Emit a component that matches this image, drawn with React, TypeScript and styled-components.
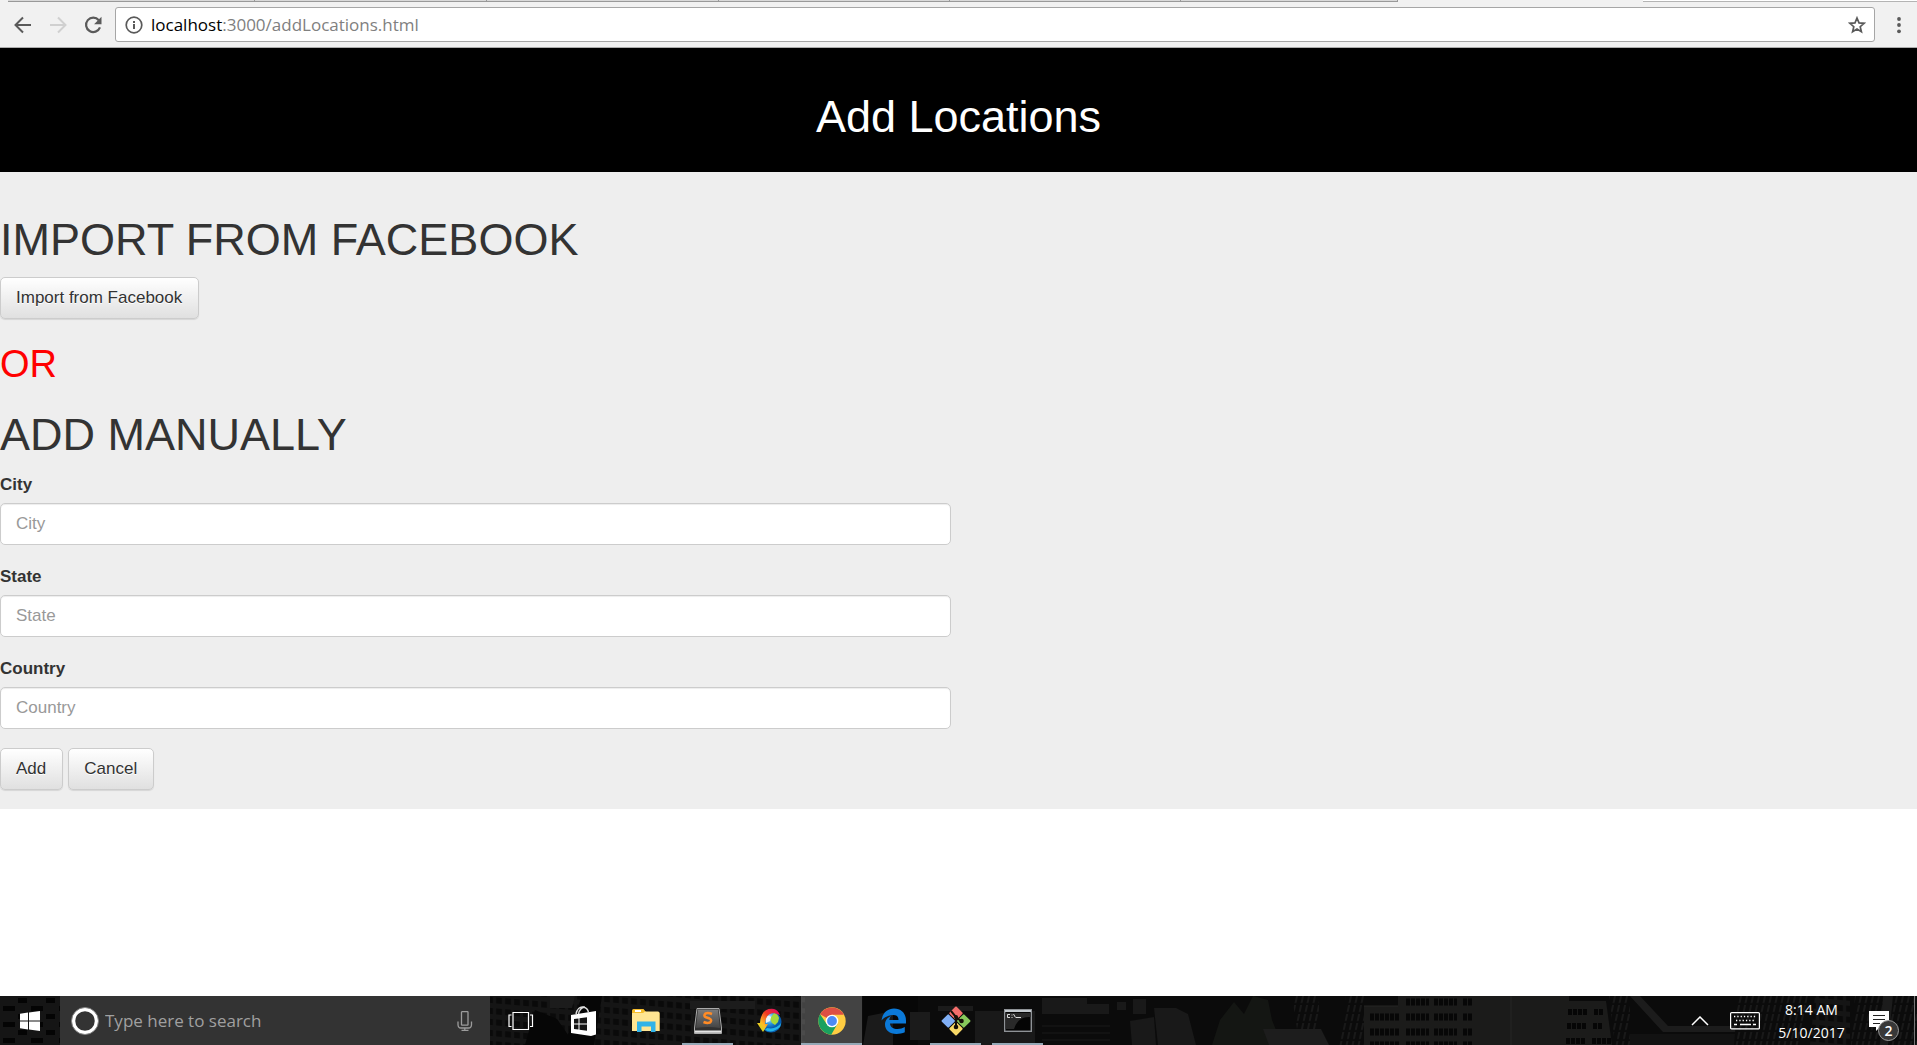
import React from "react";
import styled, { createGlobalStyle } from "styled-components";

const GlobalStyle = createGlobalStyle`
  *, *::before, *::after { box-sizing: border-box; }
  body { margin: 0; background: #fff; }
`;

const uiFont = `"Open Sans", "Noto Sans", sans-serif`;
const pageFont = `"Liberation Sans", Arial, sans-serif`;

const Screen = styled.div`
  display: flex;
  flex-direction: column;
  height: 100vh;
  overflow: hidden;
`;

/* ---------- Browser chrome ---------- */

const TabStrip = styled.div`
  display: flex;
  flex: none;
  height: 2px;
  padding-left: 8px;
  background: #f1f1f1;
`;

type TabState = "idle" | "active" | "empty";

const tabFill = { idle: "#d9d9d9", active: "#f1f1f1", empty: "#fff" };
const tabEdge = { idle: "1px solid #999", active: "0", empty: "1px solid #b4b4b4" };

const Tab = styled.div<{ $state: TabState; $grow: number }>`
  flex: ${(p) => p.$grow} 1 0;
  background: ${(p) => tabFill[p.$state]};
  border-bottom: ${(p) => tabEdge[p.$state]};
  border-right: ${(p) => (p.$state === "idle" ? "1px solid #999" : "0")};
`;

const Toolbar = styled.div`
  display: flex;
  flex: none;
  align-items: center;
  height: 46px;
  padding: 0 5px;
  background: #f1f1f1;
  border-bottom: 1px solid #adadad;
`;

const ToolButton = styled.button<{ $width?: number }>`
  display: flex;
  align-items: center;
  justify-content: center;
  flex: none;
  width: ${(p) => p.$width ?? 35}px;
  height: 34px;
  padding: 0;
  border: 0;
  background: none;
`;

const AddressBar = styled.div`
  display: flex;
  flex: 1;
  align-items: center;
  height: 35px;
  margin: 0 10px 0 5px;
  background: #fff;
  border: 1px solid #a6a6a6;
  border-radius: 3px;
`;

const Url = styled.div`
  flex: 1;
  color: #808080;
  font: 17px/24px ${uiFont};
  b {
    color: #000;
    font-weight: 400;
  }
`;

/* ---------- Web page ---------- */

const Page = styled.main`
  flex: 1;
  min-height: 0;
  background: #fff;
  color: #333;
  font: 17px/25px ${pageFont};
`;

const Banner = styled.header`
  padding: 19px 0 18px;
  background: #000;
  color: #fff;
  text-align: center;
`;

const Panel = styled.section`
  padding: 18px 0 19px;
  background: #eee;
`;

const Title = styled.h1`
  margin: 0;
  padding: 25px 0 12px;
  font-size: 45px;
  font-weight: 400;
  line-height: 50px;
`;

const Divider = styled.h2`
  margin: 0;
  padding-top: 25px;
  color: #f00;
  font-size: 38px;
  font-weight: 400;
  line-height: 41px;
`;

const Button = styled.button`
  display: block;
  height: 42px;
  padding: 0 16px 2px 15px;
  border: 1px solid #ccc;
  border-radius: 5px;
  background: linear-gradient(#fff, #e0e0e0);
  box-shadow: inset 0 1px 0 rgba(255, 255, 255, 0.15), 0 1px 1px rgba(0, 0, 0, 0.1);
  color: #333;
  font: inherit;
  text-shadow: 0 1px 0 #fff;
`;

const Field = styled.div`
  width: calc(50% - 8px);
  margin-bottom: 19px;
`;

const Label = styled.label`
  display: block;
  margin-bottom: 6px;
  font-weight: 700;
`;

const TextBox = styled.input`
  display: block;
  width: 100%;
  height: 42px;
  padding: 0 15px;
  border: 1px solid #ccc;
  border-radius: 5px;
  background: #fff;
  box-shadow: inset 0 1px 1px rgba(0, 0, 0, 0.075);
  color: #555;
  font: inherit;
  &::placeholder {
    color: #999;
    opacity: 1;
  }
`;

const Actions = styled.div`
  display: flex;
  gap: 5px;
`;

/* ---------- Taskbar ---------- */

const Taskbar = styled.footer`
  position: relative;
  display: flex;
  flex: none;
  height: 49px;
  background: #0b0b0b;
  color: #fff;
  font-family: ${uiFont};
`;

const Wallpaper = styled.svg`
  position: absolute;
  inset: 0;
  width: 100%;
  height: 100%;
`;

const StartButton = styled.button`
  position: relative;
  width: 60px;
  padding: 0;
  border: 0;
  background: none;
  svg {
    vertical-align: middle;
  }
`;

const SearchBox = styled.div`
  position: relative;
  display: flex;
  align-items: center;
  width: 430px;
  padding: 0 17px 0 11px;
  background: #333;
`;

const SearchInput = styled.input`
  flex: 1;
  min-width: 0;
  margin-left: 6px;
  padding: 0;
  border: 0;
  background: none;
  color: #a0a0a0;
  font: 17px/24px ${uiFont};
  &::placeholder {
    color: #a0a0a0;
    opacity: 1;
  }
`;

const Apps = styled.nav`
  position: relative;
  display: flex;
  flex: 1;
  gap: 1px;
  padding-left: 1px;
`;

const AppButton = styled.button<{ $running?: boolean; $active?: boolean }>`
  display: flex;
  align-items: center;
  justify-content: center;
  width: 61px;
  padding: 0;
  border: 0;
  background: ${(p) =>
    p.$active
      ? "linear-gradient(#94a8b6, #94a8b6) bottom / 100% 2px no-repeat, rgba(255, 255, 255, 0.23)"
      : p.$running
      ? "linear-gradient(#94a8b6, #94a8b6) bottom / 51px 2px no-repeat"
      : "none"};
`;

const Tray = styled.div`
  position: relative;
  display: flex;
  align-items: center;
  padding-right: 2px;
`;

const Clock = styled.time`
  width: 89px;
  font-size: 14px;
  line-height: 23px;
  text-align: center;
`;

const Notifications = styled.button`
  position: relative;
  width: 59px;
  height: 49px;
  padding: 0;
  border: 0;
  border-right: 1px solid #777;
  background: none;
  color: #fff;
  svg {
    position: absolute;
    left: 13px;
    top: 15px;
  }
`;

const Badge = styled.span`
  position: absolute;
  left: 22px;
  top: 24px;
  width: 21px;
  height: 21px;
  border: 1px solid #9a9a9a;
  border-radius: 50%;
  background: #383838;
  font: 600 14px/19px ${uiFont};
  text-align: center;
`;

/* ---------- Drawings ---------- */

const Arrow = ({ color, flip }: { color: string; flip?: boolean }) => (
  <svg width="20" height="20" viewBox="0 0 20 20" fill="none" stroke={color} strokeWidth="2">
    <path d={flip ? "M2 10h15M10 2.5l7.5 7.5-7.5 7.5" : "M18 10H3M10 2.5L2.5 10l7.5 7.5"} />
  </svg>
);

const Reload = () => (
  <svg width="20" height="20" viewBox="0 0 20 20">
    <path d="M15.8 5.2A7.2 7.2 0 1 0 17 12.4" fill="none" stroke="#5a5a5a" strokeWidth="2.2" />
    <path d="M18.5 1.8v7.4h-7.4z" fill="#5a5a5a" />
  </svg>
);

const Info = () => (
  <svg width="18" height="18" viewBox="0 0 18 18">
    <circle cx="9" cy="9" r="7.8" fill="none" stroke="#5a5a5a" strokeWidth="1.7" />
    <path d="M8 8h2v5H8zM8 5h2v2H8z" fill="#5a5a5a" />
  </svg>
);

const Star = () => (
  <svg width="18" height="18" viewBox="0 0 18 18">
    <path
      d="M9 2l2 4.9 5.1.4-3.9 3.4 1.2 5L9 13l-4.4 2.7 1.2-5L1.9 7.3 7 6.9z"
      fill="none"
      stroke="#5a5a5a"
      strokeWidth="1.7"
    />
  </svg>
);

const Dots = () => (
  <svg width="4" height="18" viewBox="0 0 4 18" fill="#5a5a5a">
    <circle cx="2" cy="3" r="1.9" />
    <circle cx="2" cy="9" r="1.9" />
    <circle cx="2" cy="15.3" r="1.9" />
  </svg>
);

const WindowsLogo = () => (
  <svg width="20" height="20" viewBox="0 0 20 20" fill="#fff">
    <path d="M0 2.7L8 1.5v8H0zM9 1.4L20 0v9.5H9zM0 10.5h8v8L0 17.3zM9 10.5h11V20L9 18.6z" />
  </svg>
);

const Mic = () => (
  <svg width="16" height="20" viewBox="0 0 16 20" fill="none" stroke="#9c9c9c" strokeWidth="1.3">
    <rect x="4.5" y="0.7" width="6.5" height="13.5" rx="0.5" />
    <path d="M1 10.5v3c0 2 1 3.5 3 3.5h7.5c2 0 3-1.5 3-3.5v-3M7.8 17v2.5M4.5 19.3h7" />
  </svg>
);

const TaskView = () => (
  <svg width="28" height="20" viewBox="0 0 28 20" fill="none" stroke="#fff" strokeWidth="1.2">
    <path d="M5 1.5h15.5v17H5zM3.5 4H1v11.5h2.5M22 4h2.5v11.5H22" />
  </svg>
);

const Store = () => (
  <svg width="28" height="32" viewBox="0 0 28 32">
    <path d="M1 10l25-4v23.5l-5 1.5-20-3z" fill="#fff" />
    <path d="M6 9c1-5 4-7.5 7-7 3 .5 5 2.5 5.5 5.5M8.5 9C9 5 12 2 15 2" fill="none" stroke="#ddd" strokeWidth="1.5" />
    <path d="M4 14l4.500-.6v5.200H4zM9.500 13.200l7.500-1v6.400H9.500zM4 19.500h4.500v5L4 24zM9.500 19.500H17v6.200l-7.500-1z" fill="#151515" />
  </svg>
);

const Folder = () => (
  <svg width="28" height="26" viewBox="0 0 28 26">
    <path d="M0 2.5Q0 1 1.5 1h10L14 4h12q1.5 0 1.5 1.5V23H0z" fill="#f5bd2d" />
    <path d="M3 2h6v2H3z" fill="#fff" />
    <path d="M0 5h11l2-1.5h13q1.5 0 1.5 1.5v18H0z" fill="#ffe592" />
    <path d="M5 13.5h18.5V24H19v-5.5h-9.5V24H5z" fill="#31b3e8" />
  </svg>
);

const Sublime = () => (
  <svg width="28" height="26" viewBox="0 0 28 26">
    <defs>
      <linearGradient id="key" x2="0" y2="1">
        <stop stopColor="#7b7b7b" />
        <stop offset="1" stopColor="#444" />
      </linearGradient>
    </defs>
    <path d="M3 .5h22l2.5 19.5v5.500H.5V20z" fill="#303030" stroke="#aaa" />
    <path d="M4 1.5h20l2 18.5q-12-2-24 0z" fill="url(#key)" />
    <path d="M1 22.5h26v2.3H1z" fill="#e4e4e4" />
    <path d="M18 6q-4-1.5-6.5-.5-2.5 2.500.5 3.800l3.500 1.200q3 1.500.5 4-3 1-6.500-.5" fill="none" stroke="#ff8b25" strokeWidth="2.5" />
  </svg>
);

const Downloader = () => (
  <svg width="26" height="26" viewBox="0 0 26 26">
    <defs>
      <linearGradient id="swoosh" x1="1" x2="0" y1="0" y2="1">
        <stop stopColor="#d9006e" />
        <stop offset=".4" stopColor="#f03a20" />
        <stop offset=".7" stopColor="#ffbd24" />
        <stop offset="1" stopColor="#b5e61c" />
      </linearGradient>
      <radialGradient id="globe" cx=".4" cy=".3">
        <stop stopColor="#d9f5ff" />
        <stop offset=".6" stopColor="#2894df" />
        <stop offset="1" stopColor="#075cae" />
      </radialGradient>
    </defs>
    <circle cx="14" cy="14" r="10.5" fill="url(#globe)" />
    <path d="M17 5q4 1 5 5l-1 4-3 3-3-2-2-4z" fill="#a5d83a" />
    <path d="M9 9q3-2 5 0l-1 4-4 2z" fill="#e9f8ff" />
    <path d="M17 1Q4-.5 3 15H0l6 9 5-8H8Q8 6 17 5l6 2Q21 2 17 1z" fill="url(#swoosh)" />
    <path d="M8 22q7 4 15-3l1-4q-5 7-14 5z" fill="#25b4e8" />
  </svg>
);

const Chrome = () => (
  <svg width="28" height="28" viewBox="0 0 28 28">
    <circle cx="14" cy="14" r="13.7" fill="#ffcd42" />
    <path d="M14 14L2.1 7.2A13.7 13.7 0 0 1 25.9 7.8H14z" fill="#dd4f43" />
    <path d="M2.1 7.2A13.7 13.7 0 0 0 13.2 27.7L19.4 17 14 14 8.6 17z" fill="#1aa15f" />
    <circle cx="14" cy="14" r="6.3" fill="#fff" />
    <circle cx="14" cy="14" r="4.9" fill="#4c8bf5" />
  </svg>
);

const Edge = () => (
  <svg width="26" height="26" viewBox="0 0 26 26">
    <path
      d="M.5 12.5C1.5 5 6.500.5 13 .5c7.500 0 12 5 12 12v3H9c.3 4 3.500 5.500 7.500 5.500 2.800 0 5.200-.7 7.300-2v5.300C21.500 25.500 18.500 26 15.500 26 8.500 26 4 22 4 16.500c0-4 2.500-7 6-8.500-1 1-1.500 2.300-1.700 4h9.200c0-3-1.500-5-5-5-4.500 0-9 2-12 5.500z"
      fill="#0b79d8"
    />
  </svg>
);

const Git = () => (
  <svg width="30" height="30" viewBox="0 0 30 30">
    <g transform="rotate(45 15 15)">
      <rect x="4.5" y="4.5" width="10" height="10" rx="1" fill="#f46e6b" />
      <rect x="15.5" y="4.5" width="10" height="10" rx="1" fill="#88c95b" />
      <rect x="4.5" y="15.5" width="10" height="10" rx="1" fill="#80aff5" />
      <rect x="15.5" y="15.5" width="10" height="10" rx="1" fill="#f8d967" />
    </g>
    <path d="M10 5l5 6v10M15 11l5 4" stroke="#171008" strokeWidth="2" fill="none" />
    <g fill="#171008">
      <circle cx="15" cy="11" r="2" />
      <circle cx="15" cy="21" r="2.3" />
      <circle cx="20.5" cy="15" r="2.3" />
    </g>
  </svg>
);

const Terminal = () => (
  <svg width="28" height="24" viewBox="0 0 28 24">
    <rect x=".7" y=".7" width="26.6" height="21.6" fill="#050505" stroke="#8e9296" strokeWidth="1.4" />
    <path d="M1 1h26v2H1z" fill="#c3c9ce" />
    <path d="M1.5 4h25v4Q14 7 10 20H1.5z" fill="#292929" />
    <path d="M6 5.5H3.5v3H6M8 5.5v1M8 8v1M9.5 5l2 3.5M12 8.5h5" fill="none" stroke="#ddd" />
  </svg>
);

const Chevron = () => (
  <svg width="18" height="10" viewBox="0 0 18 10" fill="none" stroke="#fff" strokeWidth="1.5">
    <path d="M1 9l8-8 8 8" />
  </svg>
);

const Keyboard = () => (
  <svg width="30" height="18" viewBox="0 0 30 18" fill="none" stroke="#fff">
    <rect x=".6" y=".6" width="28.8" height="16.3" rx="1" strokeWidth="1.2" />
    <path d="M4 4.5h22M6 8.5h19" strokeWidth="1.3" strokeDasharray="1.3 2" />
    <path d="M4 12.5h3M10 12.5h11M23 12.5h3" strokeWidth="1.3" />
  </svg>
);

const Message = () => (
  <svg width="20" height="20" viewBox="0 0 20 20">
    <path d="M0 0h20v16H11l-4 4v-4H0z" fill="#fff" />
    <path d="M4 4.5h12M4 8.5h12M4 12.5h7" stroke="#222" strokeWidth="1.2" />
  </svg>
);

const windowRows = [6, 21, 36, 49];

const City = () => (
  <Wallpaper viewBox="0 0 1917 49" preserveAspectRatio="none" aria-hidden="true">
    <defs>
      <pattern id="blocks" width="28" height="16" patternUnits="userSpaceOnUse">
        <rect width="28" height="16" fill="#151515" />
        <path d="M3 10h12v5H3zM18 2h9v5h-9z" fill="#040404" />
      </pattern>
      <pattern id="grid" width="9" height="11" patternUnits="userSpaceOnUse" patternTransform="skewY(5)">
        <rect width="9" height="11" fill="#151515" />
        <path d="M1 2h6v6H1z" fill="#0a0a0a" />
      </pattern>
      <pattern id="tower" width="6" height="9" patternUnits="userSpaceOnUse" patternTransform="skewX(-12)">
        <rect width="6" height="9" fill="#0b0b0b" />
        <path d="M0 0h2v7H0z" fill="#191919" />
      </pattern>
    </defs>
    <rect width="60" height="49" fill="url(#blocks)" />
    <rect x="490" width="315" height="49" fill="url(#grid)" />
    <path d="M535 14l22 9 18 26h-50zM582 0h20l-8 49h-30z" fill="#060606" />
    <path d="M550 0h25l-3 12h-22zM690 5h65v8h-65z" fill="#1c1c1c" />
    <path d="M863 0h55v49h-55z" fill="#070707" />
    <path d="M868 20l25-5v34h-30zM910 16h20v28h-20zM938 10h35v5h-35z" fill="#1b1b1b" />
    <path d="M975 15h60v34h-60zM1042 2h45v6h22v10h-67z" fill="#191919" />
    <path d="M1042 30h68M1042 37h68M1042 44h68" stroke="#1a1a1a" />
    <path d="M1117 6h9v8h-9zM1133 3h13v15h-13zM1130 25l24-4 2 28h-24zM1154 12h22l12 6 8 31h-38z" fill="#191919" />
    <path d="M1212 49l8-25 14-18 10 12 9-18 15 4 4 20 10 25z" fill="#141613" />
    <path d="M1292 0h27v33h-22z" fill="url(#tower)" />
    <path d="M1263 33h58l8 16h-60z" fill="#1d1d1d" />
    <path d="M1346 0h19v49h-26z" fill="url(#tower)" />
    <path d="M1364 10h34V0h171v49h-205z" fill="#1b1b1a" />
    <path d="M1364 10h34M1511 0v49" fill="none" stroke="#262625" />
    {windowRows.map((y, row) => (
      <path
        key={y}
        d={`${row ? `M1370 ${y}h29` : ""}M1406 ${y}h23M1434 ${y}h23M1463 ${y}h9`}
        stroke="#070707"
        strokeWidth="7"
        strokeDasharray="4 1"
      />
    ))}
    <path d="M1569 5h37l6 44h-43z" fill="#1b1b1a" />
    <path d="M1568 16h20M1594 16h9M1567 30h20M1593 30h10M1566 45h20M1592 45h20" stroke="#060606" strokeWidth="6" strokeDasharray="4 1" />
    <path d="M1609 0h21v49h-15z" fill="url(#tower)" />
    <path d="M1630 0h10l28 30h68v6h-73z" fill="#1c1c1c" />
    <path d="M1630 38h107v11h-107z" fill="#121212" />
    <path d="M1738 0h70l-8 49h-66z" fill="url(#tower)" />
    <path d="M1815 0h35v49h-40z" fill="url(#grid)" />
    <path d="M1855 0h62v49h-66z" fill="url(#tower)" />
    <path d="M1883 0h10l-5 49h-8z" fill="#1c1c1c" />
  </Wallpaper>
);

/* ---------- Screen content ---------- */

const tabs: { state: TabState; grow: number }[] = [
  { state: "idle", grow: 247 },
  { state: "idle", grow: 232 },
  { state: "idle", grow: 231 },
  { state: "idle", grow: 231 },
  { state: "idle", grow: 231 },
  { state: "idle", grow: 216 },
  { state: "active", grow: 246 },
  { state: "empty", grow: 275 },
];

const fields = ["City", "State", "Country"];

const apps = [
  { name: "Task View", icon: <TaskView /> },
  { name: "Store", icon: <Store /> },
  { name: "File Explorer", icon: <Folder /> },
  { name: "Sublime Text", icon: <Sublime />, running: true },
  { name: "Download Manager", icon: <Downloader /> },
  { name: "Chrome", icon: <Chrome />, active: true },
  { name: "Edge", icon: <Edge /> },
  { name: "Git", icon: <Git />, running: true },
  { name: "Command Prompt", icon: <Terminal />, running: true },
];

export default function App() {
  return (
    <Screen>
      <GlobalStyle />
      <TabStrip>
        {tabs.map((tab, i) => (
          <Tab key={i} $state={tab.state} $grow={tab.grow} />
        ))}
      </TabStrip>
      <Toolbar>
        <ToolButton aria-label="Back"><Arrow color="#5a5a5a" /></ToolButton>
        <ToolButton aria-label="Forward"><Arrow color="#d0d0d0" flip /></ToolButton>
        <ToolButton aria-label="Reload"><Reload /></ToolButton>
        <AddressBar>
          <ToolButton aria-label="Site information"><Info /></ToolButton>
          <Url><b>localhost</b>:3000/addLocations.html</Url>
          <ToolButton aria-label="Bookmark this page"><Star /></ToolButton>
        </AddressBar>
        <ToolButton $width={27} aria-label="Menu"><Dots /></ToolButton>
      </Toolbar>

      <Page>
        <Banner>
          <Title>Add Locations</Title>
        </Banner>
        <Panel>
          <Title>IMPORT FROM FACEBOOK</Title>
          <Button type="button">Import from Facebook</Button>
          <Divider>OR</Divider>
          <Title>ADD MANUALLY</Title>
          <form onSubmit={(e) => e.preventDefault()}>
            {fields.map((name) => (
              <Field key={name}>
                <Label htmlFor={name}>{name}</Label>
                <TextBox id={name} type="text" placeholder={name} />
              </Field>
            ))}
            <Actions>
              <Button type="submit">Add</Button>
              <Button type="button">Cancel</Button>
            </Actions>
          </form>
        </Panel>
      </Page>

      <Taskbar>
        <City />
        <StartButton aria-label="Start"><WindowsLogo /></StartButton>
        <SearchBox>
          <svg width="28" height="28" viewBox="0 0 28 28">
            <circle cx="14" cy="14" r="11.5" fill="none" stroke="#fff" strokeWidth="3.5" />
            <circle cx="14" cy="14" r="13.5" fill="none" stroke="#888" />
          </svg>
          <SearchInput type="text" aria-label="Search" placeholder="Type here to search" />
          <Mic />
        </SearchBox>
        <Apps>
          {apps.map((app) => (
            <AppButton key={app.name} aria-label={app.name} $running={app.running} $active={app.active}>
              {app.icon}
            </AppButton>
          ))}
        </Apps>
        <Tray>
          <ToolButton $width={45} aria-label="Show hidden icons"><Chevron /></ToolButton>
          <ToolButton $width={45} aria-label="Touch keyboard"><Keyboard /></ToolButton>
          <Clock>
            8:14 AM
            <br />
            5/10/2017
          </Clock>
          <Notifications aria-label="Notifications">
            <Message />
            <Badge>2</Badge>
          </Notifications>
        </Tray>
      </Taskbar>
    </Screen>
  );
}
